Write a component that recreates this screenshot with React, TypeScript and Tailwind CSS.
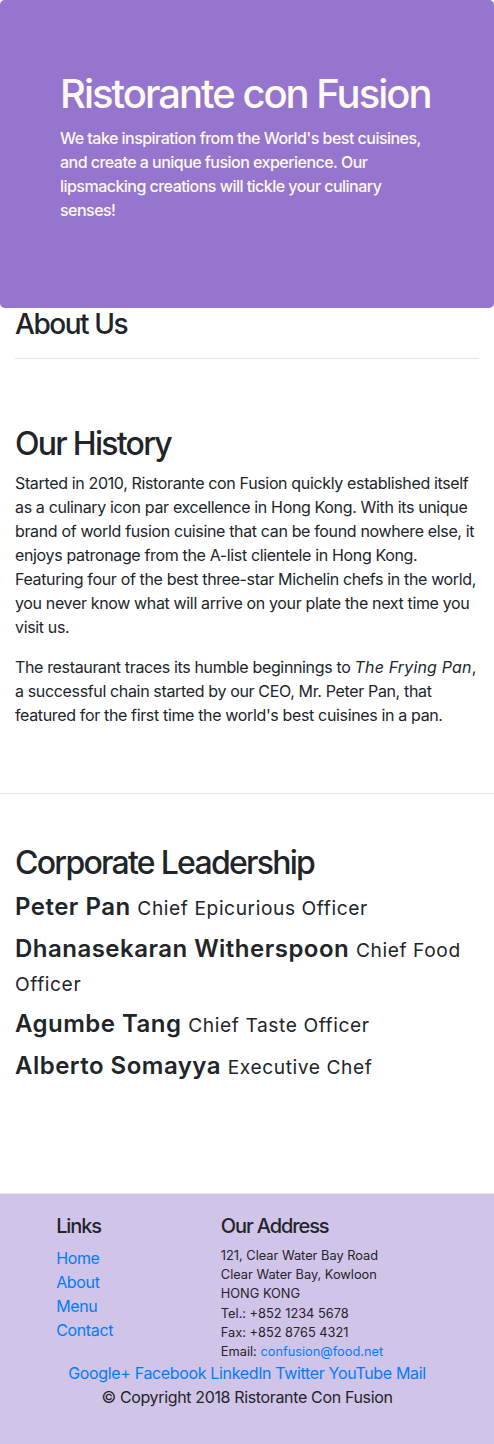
const leaders = [
  { name: "Peter Pan", designation: "Chief Epicurious Officer" },
  { name: "Dhanasekaran Witherspoon", designation: "Chief Food Officer" },
  { name: "Agumbe Tang", designation: "Chief Taste Officer" },
  { name: "Alberto Somayya", designation: "Executive Chef" },
];

const App = () => {
  return (
    <div className="font-['Inter',sans-serif] text-[#212529] text-base leading-6 tracking-[-0.022em] bg-white">
      {/* jumbotron */}
      <div className="rounded-[4.8px] bg-[#9575cd] text-[#fffaf0] px-[30px] py-[70px]">
        <div className="px-[30px]">
          <h1 className="text-[40px] leading-[48px] font-medium tracking-[-0.05em] mb-2">
            Ristorante con Fusion
          </h1>
          <p className="mb-4 font-medium tracking-[-0.033em]">
            We take inspiration from the World's best cuisines, and create a
            unique fusion experience. Our lipsmacking creations will tickle your
            culinary senses!
          </p>
        </div>
      </div>

      <div className="px-[15px]">
        <h3 className="text-[28px] leading-[33.6px] font-medium tracking-[-0.052em]">
          About Us
        </h3>
        <hr className="mt-4 mb-4 border-black/10" />
      </div>

      <div className="py-[50px] min-h-[400px] border-b border-[#e6e6e6]">
        <div className="px-[15px]">
          <h2 className="text-[32px] leading-[38.4px] font-medium tracking-[-0.054em] mb-2">
            Our History
          </h2>
          <p className="mb-4">
            Started in 2010, Ristorante con Fusion quickly established itself as
            a culinary icon par excellence in Hong Kong. With its unique brand of
            world fusion cuisine that can be found nowhere else, it enjoys
            patronage from the A-list clientele in Hong Kong. Featuring four of
            the best three-star Michelin chefs in the world, you never know what
            will arrive on your plate the next time you visit us.
          </p>
          <p className="mb-4">
            The restaurant traces its humble beginnings to{" "}
            <em className="tracking-[0.01em]">The Frying Pan</em>, a successful
            chain started by our CEO, Mr. Peter Pan, that featured for the first
            time the world's best cuisines in a pan.
          </p>
        </div>
      </div>

      <div className="py-[50px] min-h-[400px] border-b border-[#e6e6e6]">
        <div className="px-[15px]">
          <h2 className="text-[32px] leading-[38.4px] font-medium tracking-[-0.054em] mb-2">
            Corporate Leadership
          </h2>
          {leaders.map((leader) => (
            <div key={leader.name} className="text-[24px] leading-[33.6px] mb-2 tracking-normal">
              <span className="font-semibold tracking-[0.02em]">{leader.name}</span>{" "}
              <span className="text-[19.2px] leading-none tracking-[0.03em]">
                {leader.designation}
              </span>
            </div>
          ))}
        </div>
      </div>

      {/* footer */}
      <div className="bg-[#d1c4e9] py-5">
        <div className="flex">
          <div className="ml-[41.17px] w-[164.67px] px-[15px]">
            <h5 className="text-[20px] leading-6 font-medium tracking-[-0.055em] mb-2">
              Links
            </h5>
            <ul className="mb-4 text-[#007bff]">
              <li>
                <a href="#">Home</a>
              </li>
              <li>
                <a href="#">About</a>
              </li>
              <li>
                <a href="#">Menu</a>
              </li>
              <li>
                <a href="#">Contact</a>
              </li>
            </ul>
          </div>
          <div className="w-[288.17px] px-[15px]">
            <h5 className="text-[20px] leading-6 font-medium tracking-[-0.055em] mb-2">
              Our Address
            </h5>
            <address className="not-italic text-[12.8px] leading-[19.2px] tracking-normal">
              121, Clear Water Bay Road
              <br />
              Clear Water Bay, Kowloon
              <br />
              HONG KONG
              <br />
              Tel.: +852 1234 5678
              <br />
              Fax: +852 8765 4321
              <br />
              Email:{" "}
              <a href="mailto:confusion@food.net" className="text-[#007bff]">
                confusion@food.net
              </a>
            </address>
          </div>
        </div>
        <div className="px-[15px] text-center text-[#007bff]">
          <a href="#">Google+</a> <a href="#">Facebook</a>{" "}
          <a href="#">LinkedIn</a> <a href="#">Twitter</a>{" "}
          <a href="#">YouTube</a> <a href="#">Mail</a>
        </div>
        <div className="flex justify-center">
          <p className="mb-4">© Copyright 2018 Ristorante Con Fusion</p>
        </div>
      </div>
    </div>
  );
};

export default App;
